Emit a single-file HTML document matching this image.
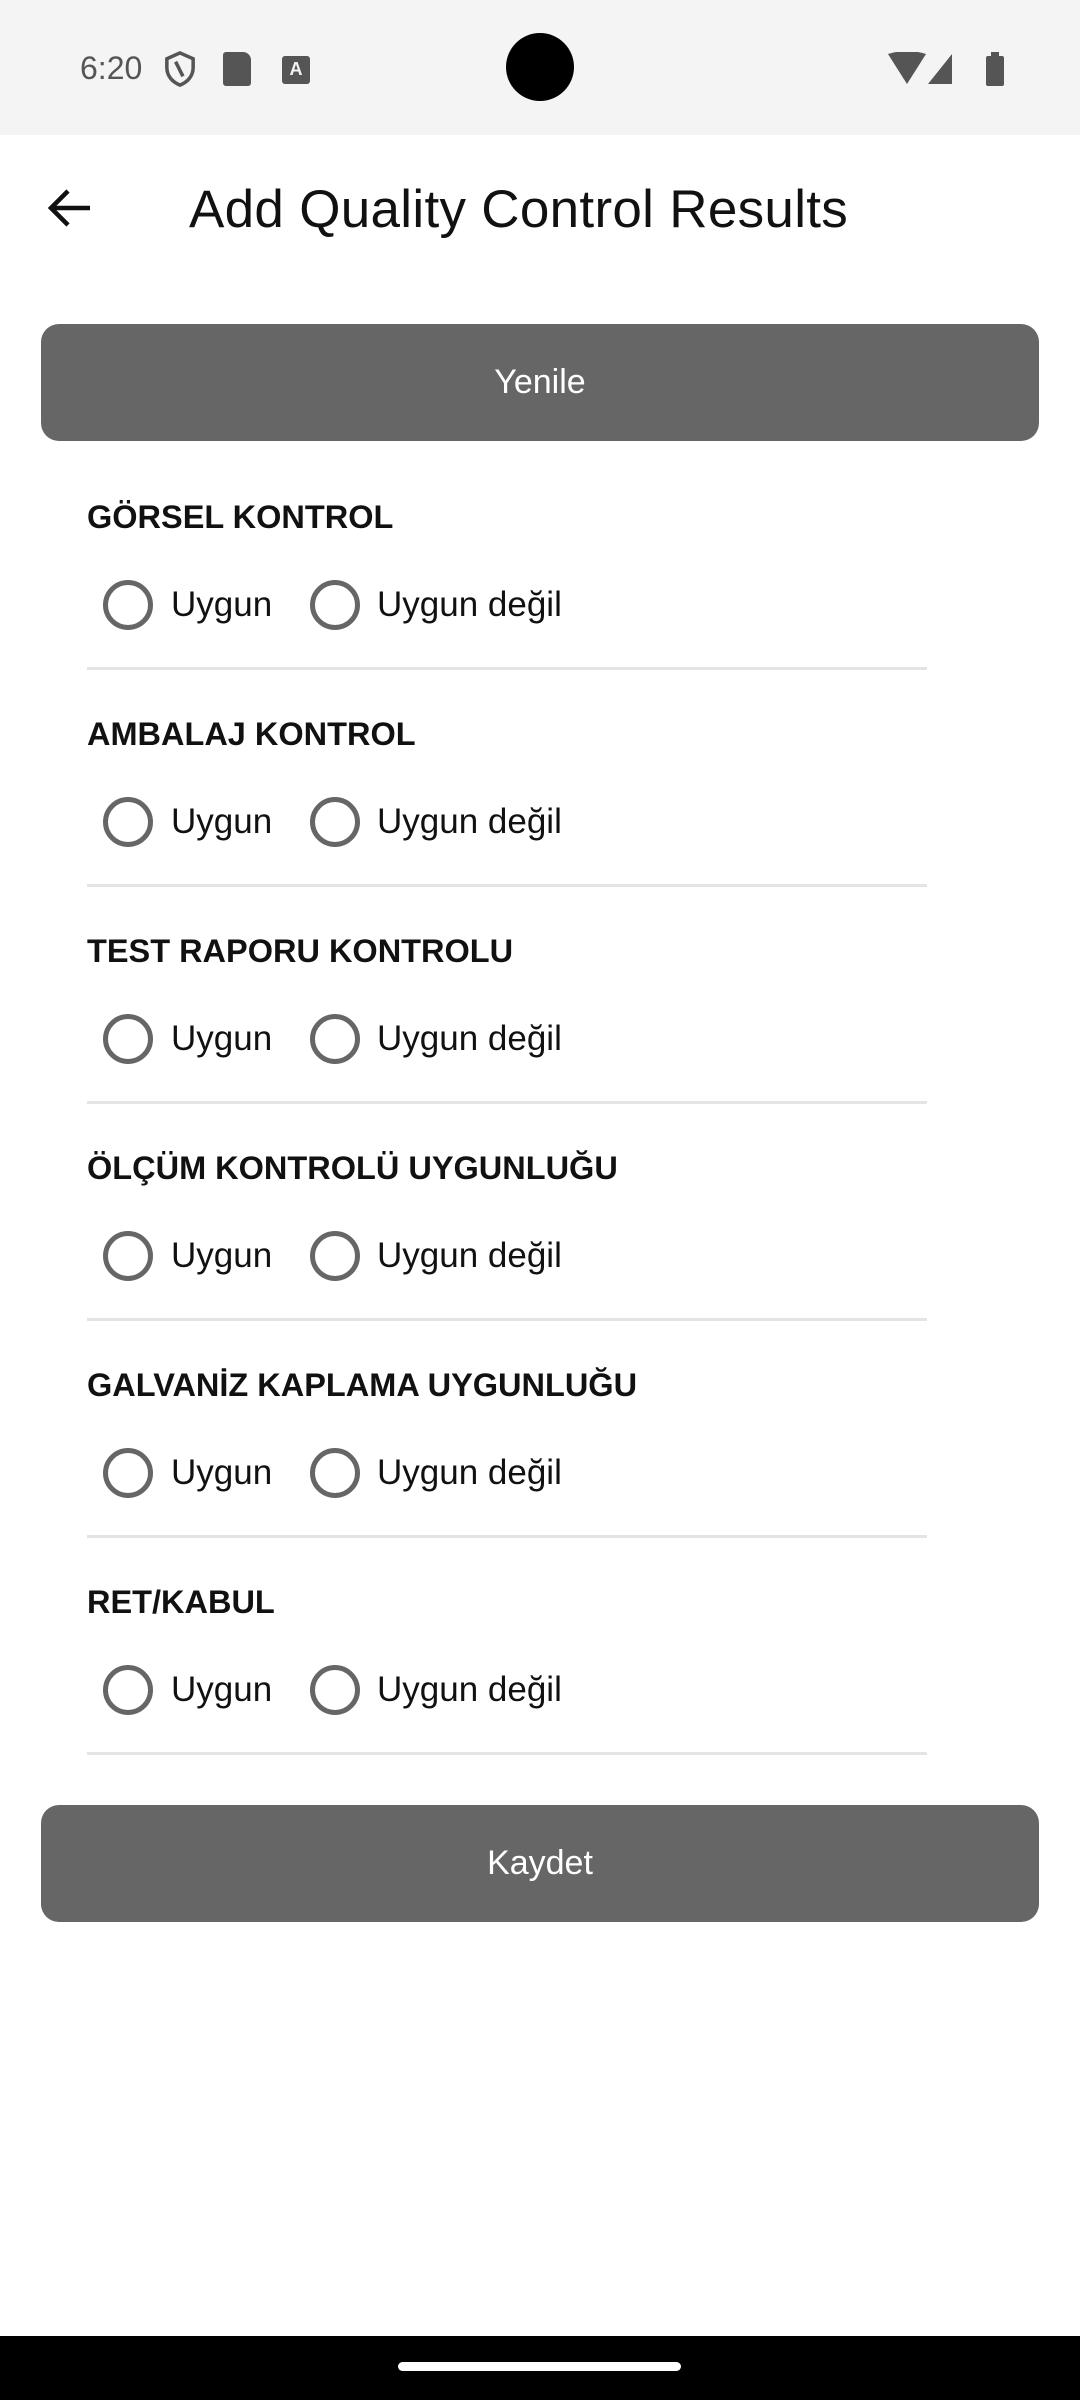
<!DOCTYPE html>
<html><head><meta charset="utf-8"><style>
*{margin:0;padding:0;box-sizing:border-box}
body{width:1080px;height:2400px;background:#fff;font-family:"Liberation Sans",sans-serif;position:relative;overflow:hidden}
.sb{position:absolute;top:0;left:0;width:1080px;height:135px;background:#f4f4f4}
.abs{position:absolute}
.btn{position:absolute;left:41px;width:998px;height:117px;background:#666;border-radius:18px;color:#fff;font-size:34px;display:flex;align-items:center;justify-content:center}
.sec{position:absolute;left:0;width:1080px;height:217px}
.h{position:absolute;left:87px;top:0;font-size:32.5px;font-weight:bold;color:#111;line-height:40px}
.r{position:absolute;top:83px;width:50px;height:50px;border:5px solid #666;border-radius:50%}
.l{position:absolute;top:87px;font-size:35px;color:#111;line-height:42px}
.d{position:absolute;left:87px;width:840px;height:3px;background:#e4e4e4}
</style></head><body>
<div class="sb"></div>
<div class="abs" style="left:80px;top:50px;font-size:32px;color:#555">6:20</div>
<svg class="abs" style="left:162px;top:50px" width="36" height="38" viewBox="0 0 24 26"><path d="M12 2 L21 6 V12 C21 18 17 22 12 24 C7 22 3 18 3 12 V6 Z" fill="none" stroke="#555" stroke-width="2.4"/><path d="M9 8 L14 18" stroke="#555" stroke-width="2.4"/></svg>
<div class="abs" style="left:223px;top:52px;width:28px;height:34px;background:#555;border-radius:3px 8px 3px 3px"></div>
<div class="abs" style="left:282px;top:56px;width:28px;height:28px;background:#555;border-radius:3px;color:#f4f4f4;font-size:18px;font-weight:bold;text-align:center;line-height:26px">A</div>
<div class="abs" style="left:506px;top:33px;width:68px;height:68px;background:#000;border-radius:50%"></div>
<svg class="abs" style="left:888px;top:52px" width="120" height="34" viewBox="0 0 120 34"><path d="M0 2 Q19 -4 38 2 L19 32 Z" fill="#555"/><path d="M40 32 L64 2 V32 Z" fill="#555"/><rect x="98" y="4" width="18" height="30" rx="2" fill="#555"/><rect x="103" y="0" width="8" height="5" fill="#555"/></svg>
<svg class="abs" style="left:46px;top:186px" width="48" height="44" viewBox="0 0 48 44"><path d="M44 22 H6 M22 5 L5 22 L22 39" fill="none" stroke="#111" stroke-width="4.5"/></svg>
<div class="abs" style="left:189px;top:178px;font-size:53px;color:#111;line-height:64px;letter-spacing:0.3px">Add Quality Control Results</div>
<div class="btn" style="top:324px">Yenile</div>

<div class="sec" style="top:497px"><div class="h">GÖRSEL KONTROL</div><div class="r" style="left:103px"></div><div class="l" style="left:171px">Uygun</div><div class="r" style="left:310px"></div><div class="l" style="left:377px">Uygun değil</div><div class="d" style="top:170px"></div></div>
<div class="sec" style="top:714px"><div class="h">AMBALAJ KONTROL</div><div class="r" style="left:103px"></div><div class="l" style="left:171px">Uygun</div><div class="r" style="left:310px"></div><div class="l" style="left:377px">Uygun değil</div><div class="d" style="top:170px"></div></div>
<div class="sec" style="top:931px"><div class="h">TEST RAPORU KONTROLU</div><div class="r" style="left:103px"></div><div class="l" style="left:171px">Uygun</div><div class="r" style="left:310px"></div><div class="l" style="left:377px">Uygun değil</div><div class="d" style="top:170px"></div></div>
<div class="sec" style="top:1148px"><div class="h">ÖLÇÜM KONTROLÜ UYGUNLUĞU</div><div class="r" style="left:103px"></div><div class="l" style="left:171px">Uygun</div><div class="r" style="left:310px"></div><div class="l" style="left:377px">Uygun değil</div><div class="d" style="top:170px"></div></div>
<div class="sec" style="top:1365px"><div class="h">GALVANİZ KAPLAMA UYGUNLUĞU</div><div class="r" style="left:103px"></div><div class="l" style="left:171px">Uygun</div><div class="r" style="left:310px"></div><div class="l" style="left:377px">Uygun değil</div><div class="d" style="top:170px"></div></div>
<div class="sec" style="top:1582px"><div class="h">RET/KABUL</div><div class="r" style="left:103px"></div><div class="l" style="left:171px">Uygun</div><div class="r" style="left:310px"></div><div class="l" style="left:377px">Uygun değil</div><div class="d" style="top:170px"></div></div>

<div class="btn" style="top:1805px">Kaydet</div>
<div class="abs" style="left:0;top:2336px;width:1080px;height:64px;background:#000"></div>
<div class="abs" style="left:398px;top:2362px;width:283px;height:9px;background:#fff;border-radius:5px"></div>
</body></html>
